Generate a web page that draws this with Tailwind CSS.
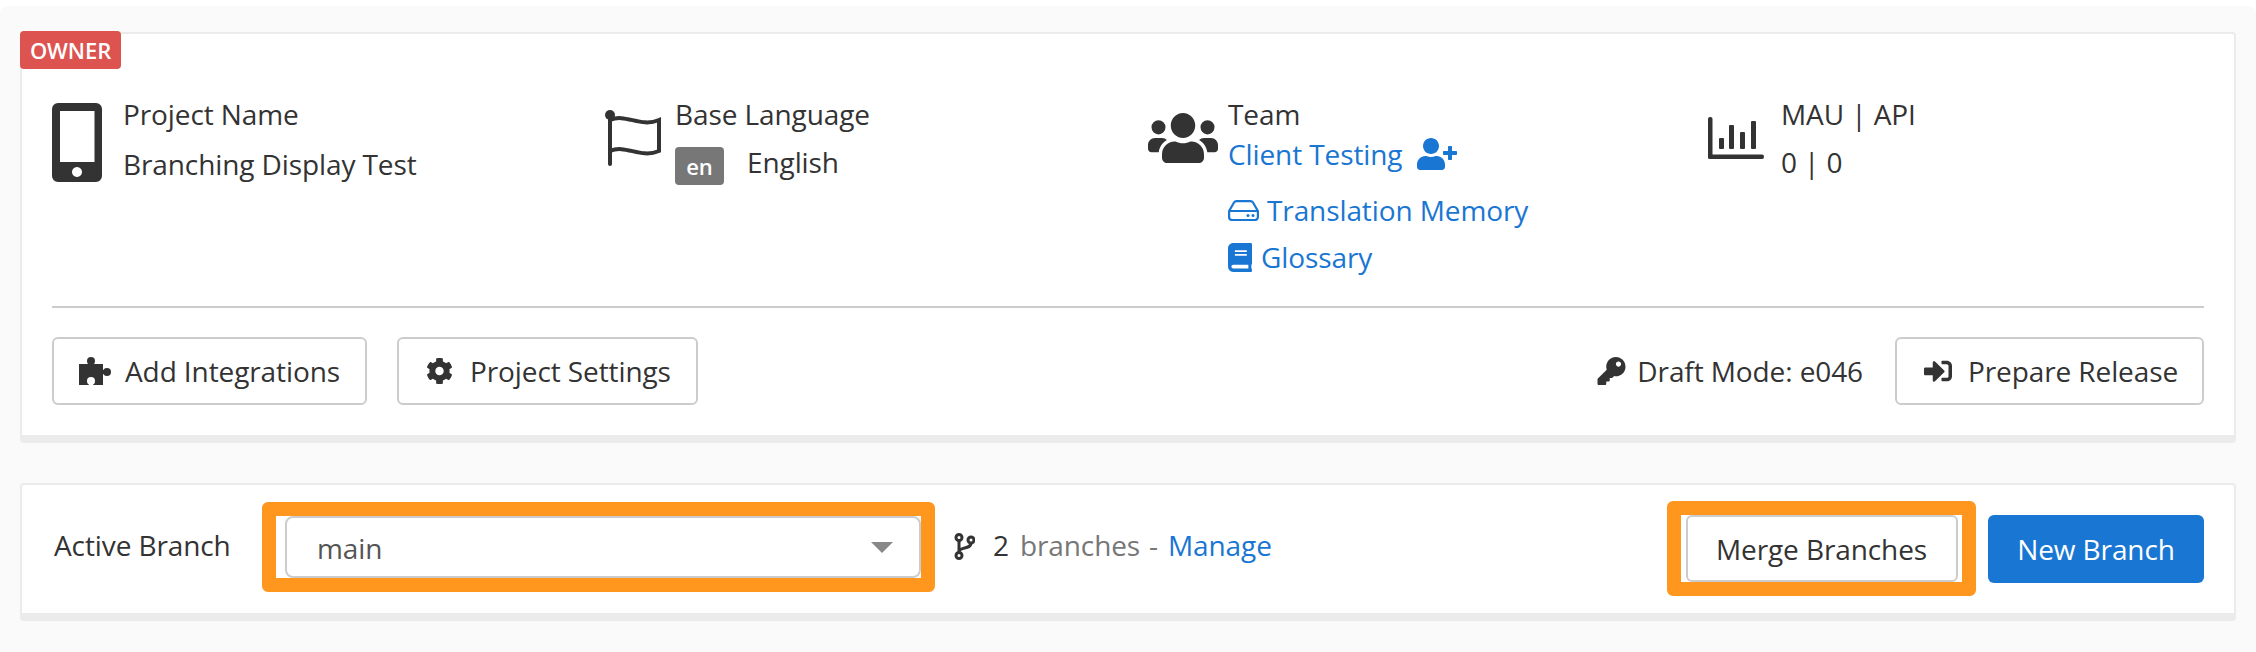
<!DOCTYPE html>
<html><head><meta charset="utf-8"><script src="https://cdn.jsdelivr.net/npm/@tailwindcss/browser@4"></script></head>
<body class="bg-white">
<div class="w-[2256px] h-[652px] overflow-hidden font-['Open_Sans',sans-serif] text-[28px] tracking-[-0.1px] text-[#333] leading-[36px]">
<div class="h-[652px] mt-[6px] bg-[#fafafa] rounded-t-[8px] pt-[26px] pl-[20px]">

<section class="relative h-[411px] w-[2216px] bg-white border-x-2 border-t-2 border-[#ebebeb] border-b-[8px] rounded-[4px] px-[30px]">
<span class="absolute -left-[2px] -top-[3px] h-[38px] w-[101px] bg-[#dc5350] text-white rounded-[4px] text-[22px] leading-[38px] text-center font-semibold">OWNER</span>
<div class="flex pt-[62px] h-[272px]">
<div class="w-[553px] flex gap-[21px]">
<svg class="w-[50px] h-[79px] mt-[7px] shrink-0" viewBox="0 0 50 79"><path fill="#333" fill-rule="evenodd" d="M6 0h38a6 6 0 0 1 6 6v67a6 6 0 0 1-6 6H6a6 6 0 0 1-6-6V6a6 6 0 0 1 6-6zM8 8v51h34.500V8zM25 64a5 5 0 1 0 .01 0z"/></svg>
<div class="flex flex-col"><div class="h-[50px]">Project Name</div><div>Branching Display Test</div></div>
</div>
<div class="w-[543px] flex gap-[14px]">
<svg class="w-[56px] h-[56px] mt-[14px] shrink-0" viewBox="0 0 56 56"><g fill="none" stroke="#333" stroke-width="4" stroke-linecap="round"><path d="M5 6v48"/><path d="M5 10c16-7 30 8 49 0v31c-19 8-33-7-49 0"/></g><circle cx="5" cy="5" r="5" fill="#333"/></svg>
<div class="flex flex-col"><div class="h-[48px]">Base Language</div><div class="flex items-start"><span class="mt-[3px] w-[49px] h-[38px] bg-[#777] text-white rounded-[4px] text-[22px] leading-[38px] text-center font-semibold">en</span><span class="ml-[23px]">English</span></div></div>
</div>
<div class="w-[560px] flex gap-[10px]">
<svg class="w-[70px] h-[50px] mt-[17px] shrink-0" viewBox="0 18 640 448" preserveAspectRatio="none"><path fill="#333" d="M96 210a64 64 0 1 0 0-128 64 64 0 0 0 0 128zm448 0a64 64 0 1 0 0-128 64 64 0 0 0 0 128zm32 32h-64c-17.600 0-33.500 7.100-45.100 18.600 40.300 22.100 68.900 62 75.100 109.400h66c17.700 0 32-14.300 32-32v-32c0-35.300-28.700-64-64-64zm-256 0c61.900 0 112-50.100 112-112S381.900 18 320 18 208 68.100 208 130s50.100 112 112 112zm76.800 32h-8.300c-20.800 10-43.900 16-68.500 16s-47.600-6-68.500-16h-8.300C179.600 274 128 325.600 128 389.200V418c0 26.500 21.500 48 48 48h288c26.500 0 48-21.500 48-48v-28.800c0-63.600-51.600-115.200-115.200-115.200zm-223.700-13.400C161.500 249.100 145.600 242 128 242H64c-35.300 0-64 28.700-64 64v32c0 17.700 14.300 32 32 32h65.900c6.300-47.400 34.900-87.300 75.200-109.400z"/></svg>
<div class="flex flex-col">
<div class="h-[40px]">Team</div>
<div class="flex items-center gap-[15px] text-[#1976d2] h-[36px]"><span>Client Testing</span><svg class="w-[40px] h-[32px]" viewBox="0 0 640 512"><path fill="#1976d2" d="M624 208h-64v-64c0-8.800-7.200-16-16-16h-32c-8.800 0-16 7.200-16 16v64h-64c-8.800 0-16 7.200-16 16v32c0 8.800 7.200 16 16 16h64v64c0 8.800 7.200 16 16 16h32c8.800 0 16-7.200 16-16v-64h64c8.800 0 16-7.200 16-16v-32c0-8.800-7.200-16-16-16zm-400 48c70.700 0 128-57.300 128-128S294.700 0 224 0 96 57.300 96 128s57.300 128 128 128zm89.600 32h-16.700c-22.200 10.200-46.900 16-72.900 16s-50.600-5.800-72.900-16h-16.700C60.200 288 0 348.200 0 422.400V464c0 26.500 21.500 48 48 48h352c26.500 0 48-21.500 48-48v-41.600c0-74.200-60.200-134.400-134.400-134.400z"/></svg></div>
<div class="flex items-center gap-[8px] text-[#1976d2] h-[36px] mt-[20px]"><svg class="w-[31px] h-[21px]" viewBox="0 0 31 21"><path fill="none" stroke="#1976d2" stroke-width="2.200" d="M1.100 11 6 2.500a3 3 0 0 1 2.500-1.400h14a3 3 0 0 1 2.500 1.400L29.900 11v6a3 3 0 0 1-3 3H4.100a3 3 0 0 1-3-3zM1.100 11h28.800"/><circle cx="25" cy="15.500" r="1.500" fill="#1976d2"/><circle cx="20" cy="15.500" r="1.500" fill="#1976d2"/></svg><span>Translation Memory</span></div>
<div class="flex items-center gap-[9px] text-[#1976d2] h-[36px] mt-[11px]"><svg class="w-[24px] h-[29px]" viewBox="0 0 448 512" preserveAspectRatio="none"><path fill="#1976d2" d="M448 360V24c0-13.300-10.700-24-24-24H96C43 0 0 43 0 96v320c0 53 43 96 96 96h328c13.300 0 24-10.700 24-24v-16c0-7.500-3.500-14.300-8.900-18.700-4.200-15.400-4.200-59.300 0-74.700 5.400-4.300 8.900-11.100 8.900-18.600zM128 134c0-3.300 2.700-6 6-6h212c3.300 0 6 2.700 6 6v20c0 3.300-2.700 6-6 6H134c-3.300 0-6-2.700-6-6v-20zm0 64c0-3.300 2.700-6 6-6h212c3.300 0 6 2.700 6 6v20c0 3.300-2.700 6-6 6H134c-3.300 0-6-2.700-6-6v-20zm253.400 250H96c-17.700 0-32-14.300-32-32 0-17.600 14.400-32 32-32h285.400c-1.900 17.100-1.900 46.900 0 64z"/></svg><span>Glossary</span></div>
</div>
</div>
<div class="flex-1 flex gap-[17px]">
<svg class="w-[56px] h-[42px] mt-[21px] shrink-0" viewBox="0 0 56 42"><g fill="#333"><rect x="0" y="0" width="4.500" height="42" rx="2"/><rect x="0" y="37.500" width="56" height="4.500" rx="2"/><rect x="11" y="21" width="5" height="11" rx="1"/><rect x="21" y="8" width="5" height="24" rx="1"/><rect x="32" y="15" width="5" height="17" rx="1"/><rect x="43" y="4" width="5" height="28" rx="1"/></g></svg>
<div class="flex flex-col"><div class="h-[48px] whitespace-pre">MAU | API</div><div class="whitespace-pre">0 | 0</div></div>
</div>
</div>
<div class="h-[2px] bg-[#ccc]"></div>
<div class="flex items-center pt-[29px]">
<button class="h-[68px] w-[315px] border-2 border-[#ccc] rounded-[6px] flex items-center pl-[25px] gap-[14px] bg-white"><svg class="w-[32px] h-[28px]" viewBox="0 0 32 28"><g fill="#333"><rect x="0" y="7" width="24" height="21"/><circle cx="12" cy="4" r="4"/><rect x="10" y="5" width="4" height="4"/><circle cx="28" cy="15" r="4"/><rect x="22" y="13" width="4" height="4"/></g><circle cx="12" cy="24" r="4" fill="#fff"/><rect x="10" y="24" width="4" height="5" fill="#fff"/></svg><span>Add Integrations</span></button>
<button class="ml-[30px] h-[68px] w-[301px] border-2 border-[#ccc] rounded-[6px] flex items-center pl-[27px] gap-[17px] bg-white"><svg class="w-[27px] h-[28px]" viewBox="0 0 512 512"><path fill="#333" d="M487.400 315.700l-42.600-24.600c4.300-23.200 4.300-47 0-70.200l42.600-24.600c4.900-2.800 7.100-8.600 5.500-14-11.100-35.600-30-67.800-54.700-94.600-3.800-4.100-10-5.100-14.800-2.300L380.800 110c-17.900-15.400-38.500-27.300-60.800-35.100V25.800c0-5.600-3.900-10.500-9.400-11.700-36.700-8.200-74.300-7.800-109.200 0-5.500 1.200-9.400 6.100-9.400 11.700V75c-22.200 7.900-42.800 19.800-60.800 35.100L88.700 85.500c-4.900-2.800-11-1.900-14.800 2.300-24.700 26.700-43.600 58.900-54.700 94.600-1.700 5.400.6 11.200 5.500 14L67.300 221c-4.300 23.200-4.300 47 0 70.200l-42.600 24.600c-4.900 2.800-7.100 8.600-5.500 14 11.100 35.600 30 67.800 54.700 94.600 3.800 4.100 10 5.100 14.800 2.300l42.600-24.600c17.900 15.400 38.500 27.300 60.800 35.100v49.200c0 5.600 3.900 10.500 9.400 11.700 36.700 8.200 74.300 7.800 109.200 0 5.500-1.200 9.400-6.100 9.400-11.700v-49.200c22.200-7.900 42.800-19.800 60.800-35.100l42.600 24.600c4.900 2.800 11 1.900 14.800-2.300 24.700-26.700 43.600-58.900 54.700-94.600 1.500-5.500-.7-11.300-5.600-14.100zM256 336c-44.100 0-80-35.900-80-80s35.900-80 80-80 80 35.900 80 80-35.900 80-80 80z"/></svg><span>Project Settings</span></button>
<div class="ml-auto flex items-center gap-[11px]"><svg class="w-[29px] h-[28px]" viewBox="0 0 512 512"><path fill="#333" d="M512 176.001C512 273.203 433.202 352 336 352c-11.220 0-22.190-1.062-32.827-3.069l-24.012 27.014A23.999 23.999 0 0 1 261.223 384H224v40c0 13.255-10.745 24-24 24h-40v40c0 13.255-10.745 24-24 24H24c-13.255 0-24-10.745-24-24v-78.059c0-6.365 2.529-12.470 7.029-16.971l161.802-161.802C163.108 213.814 160 195.271 160 176 160 78.798 238.797.001 335.999 0 433.488-.001 512 78.511 512 176.001zM336 128c0 26.510 21.490 48 48 48s48-21.490 48-48-21.490-48-48-48-48 21.490-48 48z"/></svg><span>Draft Mode: e046</span></div>
<button class="ml-[32px] h-[68px] w-[309px] border-2 border-[#ccc] rounded-[6px] flex items-center pl-[27px] gap-[16px] bg-white"><svg class="w-[28px] h-[24px]" viewBox="0 32 512 448" preserveAspectRatio="none"><path fill="#333" d="M416 448h-84c-6.600 0-12-5.400-12-12v-40c0-6.600 5.400-12 12-12h84c17.700 0 32-14.300 32-32V160c0-17.700-14.300-32-32-32h-84c-6.600 0-12-5.400-12-12V76c0-6.600 5.400-12 12-12h84c53 0 96 43 96 96v192c0 53-43 96-96 96zm-47-201L201 79c-15-15-41-4.500-41 17v96H24c-13.300 0-24 10.700-24 24v96c0 13.300 10.700 24 24 24h136v96c0 21.500 26 32 41 17l168-168c9.300-9.400 9.300-24.600 0-34z"/></svg><span>Prepare Release</span></button>
</div>
</section>

<section class="mt-[40px] relative h-[138px] w-[2216px] bg-white border-x-2 border-t-2 border-[#ebebeb] border-b-[8px] rounded-[4px] pl-[32px] pr-[30px] flex items-center">
<span class="w-[208px] shrink-0 -mt-[8px]">Active Branch</span>
<div class="w-[673px] h-[90px] border-[14px] border-[#ff971e] rounded-[6px] bg-white flex items-center justify-end shrink-0 -mt-[4px]">
<div class="w-[636px] h-[62px] border-2 border-[#ccc] rounded-[8px] flex items-center justify-between pl-[30px] pr-[26px] text-[#555]"><span class="mt-[2px]">main</span><span class="w-0 h-0 border-x-[11px] border-x-transparent border-t-[11px] border-t-[#888]"></span></div>
</div>
<svg class="ml-[19px] w-[21px] h-[27px] -mt-[6px]" viewBox="0 0 21 27"><g fill="none" stroke="#333" stroke-width="3"><circle cx="5" cy="4.500" r="3"/><circle cx="5" cy="22.500" r="3"/><circle cx="17" cy="7" r="3"/><path d="M5 8v11M5 19c0-6 12-2 12-9"/></g></svg>
<span class="ml-[18px] -mt-[8px]">2</span><span class="ml-[11px] -mt-[8px] text-[#777]">branches</span><span class="ml-[9px] -mt-[8px] text-[#777]">-</span><span class="ml-[10px] -mt-[8px] text-[#1976d2]">Manage</span>
<div class="ml-auto w-[309px] h-[95px] border-[14px] border-[#ff971e] rounded-[6px] bg-white flex items-center justify-center -mt-[1px]"><button class="w-[272px] h-[67px] border-2 border-[#ccc] rounded-[6px]">Merge Branches</button></div>
<button class="ml-[12px] w-[216px] h-[68px] bg-[#1976d2] text-white rounded-[6px]">New Branch</button>
</section>
</div></div>
</body></html>
